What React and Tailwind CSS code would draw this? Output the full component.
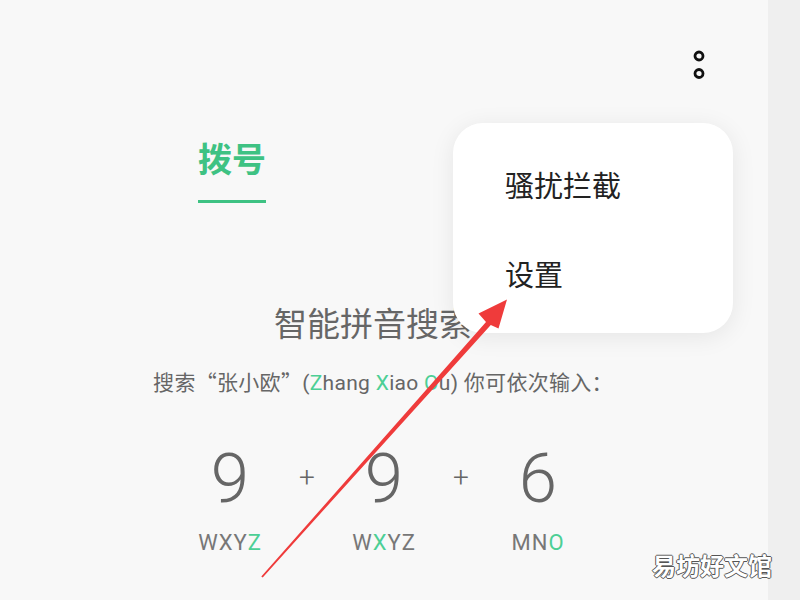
import React from "react";

const cjk = { fontFamily: '"Noto Sans CJK SC", sans-serif' };

const keys = [
    { digit: "9", letters: ["W", "X", "Y", "Z"], hit: 3 },
    { plus: true },
    { digit: "9", letters: ["W", "X", "Y", "Z"], hit: 1 },
    { plus: true },
    { digit: "6", letters: ["M", "N", "O"], hit: 2 },
];

const KebabIcon = () => (
    <svg width="12" height="30" viewBox="0 0 12 30">
        <circle cx="6" cy="6" r="4" fill="none" stroke="#111" strokeWidth="2.8" />
        <circle cx="6" cy="23.5" r="4" fill="none" stroke="#111" strokeWidth="2.8" />
    </svg>
);

const Arrow = () => (
    <svg className="absolute left-0 top-0 pointer-events-none" width="800" height="600" viewBox="0 0 800 600">
        <polygon
            points="261.3,576.6 486,322 478.5,313.5 507,299.5 498.5,328.5 490.8,325 262.7,577.4"
            fill="#ef3b3b"
        />
    </svg>
);

const App = () => {
    return (
        <div className="w-[800px] h-[600px] flex overflow-hidden" style={{ fontFamily: 'Roboto, "Noto Sans CJK SC", sans-serif' }}>
            <div className="relative w-[768px] h-full bg-[#f8f8f8]">
                {/* top bar */}
                <div className="flex justify-end pt-[50px] pr-[63px]">
                    <KebabIcon />
                </div>

                {/* tabs */}
                <div className="grid grid-cols-2 px-[80px] mt-[61px]">
                    <div className="flex flex-col items-center">
                        <span className="text-[34px] leading-none font-bold text-[#3ec283]" style={cjk}>拨号</span>
                        <div className="mt-[25px] w-[68px] h-[3px] bg-[#3ec283]" />
                    </div>
                    <div />
                </div>

                {/* hint */}
                <div className="flex flex-col items-center">
                    <h2 className="mt-[103px] pr-[22px] text-[33px] leading-none text-[#666]" style={cjk}>智能拼音搜索</h2>
                    <p className="mt-[32px] pr-[2px] text-[21px] leading-none tracking-[0.3px] text-[#666] whitespace-nowrap">
                        <span style={cjk}>搜索“张小欧”</span>(<span className="text-[#4ccf95]">Z</span>hang <span className="text-[#4ccf95]">X</span>iao <span className="text-[#4ccf95]">O</span>u) <span style={cjk}>你可依次输入：</span>
                    </p>
                </div>

                {/* key sequence */}
                <div className="flex justify-center mt-[50px]">
                    {keys.map((k, i) => (
                        <div key={i} className="w-[77px] flex flex-col items-center">
                            {k.plus ? (
                                <span className="mt-[20px] text-[28px] leading-none font-light text-[#666]">+</span>
                            ) : (
                                <>
                                    <span className="text-[69px] leading-none font-light text-[#666]">{k.digit}</span>
                                    <span className="mt-[19px] text-[22px] leading-none tracking-[1px] text-[#777]">
                                        {k.letters.map((l, j) => (
                                            <span key={j} className={j === k.hit ? "text-[#4ccf95]" : ""}>{l}</span>
                                        ))}
                                    </span>
                                </>
                            )}
                        </div>
                    ))}
                </div>

                {/* overflow menu */}
                <div className="absolute left-[453px] top-[123px] w-[280px] h-[210px] bg-white rounded-[30px] shadow-[0_4px_24px_rgba(0,0,0,0.08)] pl-[52px] pt-[47px]" style={cjk}>
                    <div className="text-[29px] leading-none text-[#222]">骚扰拦截</div>
                    <div className="mt-[60px] text-[29px] leading-none text-[#222]">设置</div>
                </div>
            </div>
            <div className="w-[32px] h-full bg-[#efefef]" />

            <Arrow />

            <div
                className="absolute left-[652px] top-[553px] text-[24px] leading-none font-bold text-white [text-shadow:1px_0_#555,-1px_0_#555,0_1px_#555,0_-1px_#555]"
                style={cjk}
            >
                易坊好文馆
            </div>
        </div>
    );
};

export default App;
